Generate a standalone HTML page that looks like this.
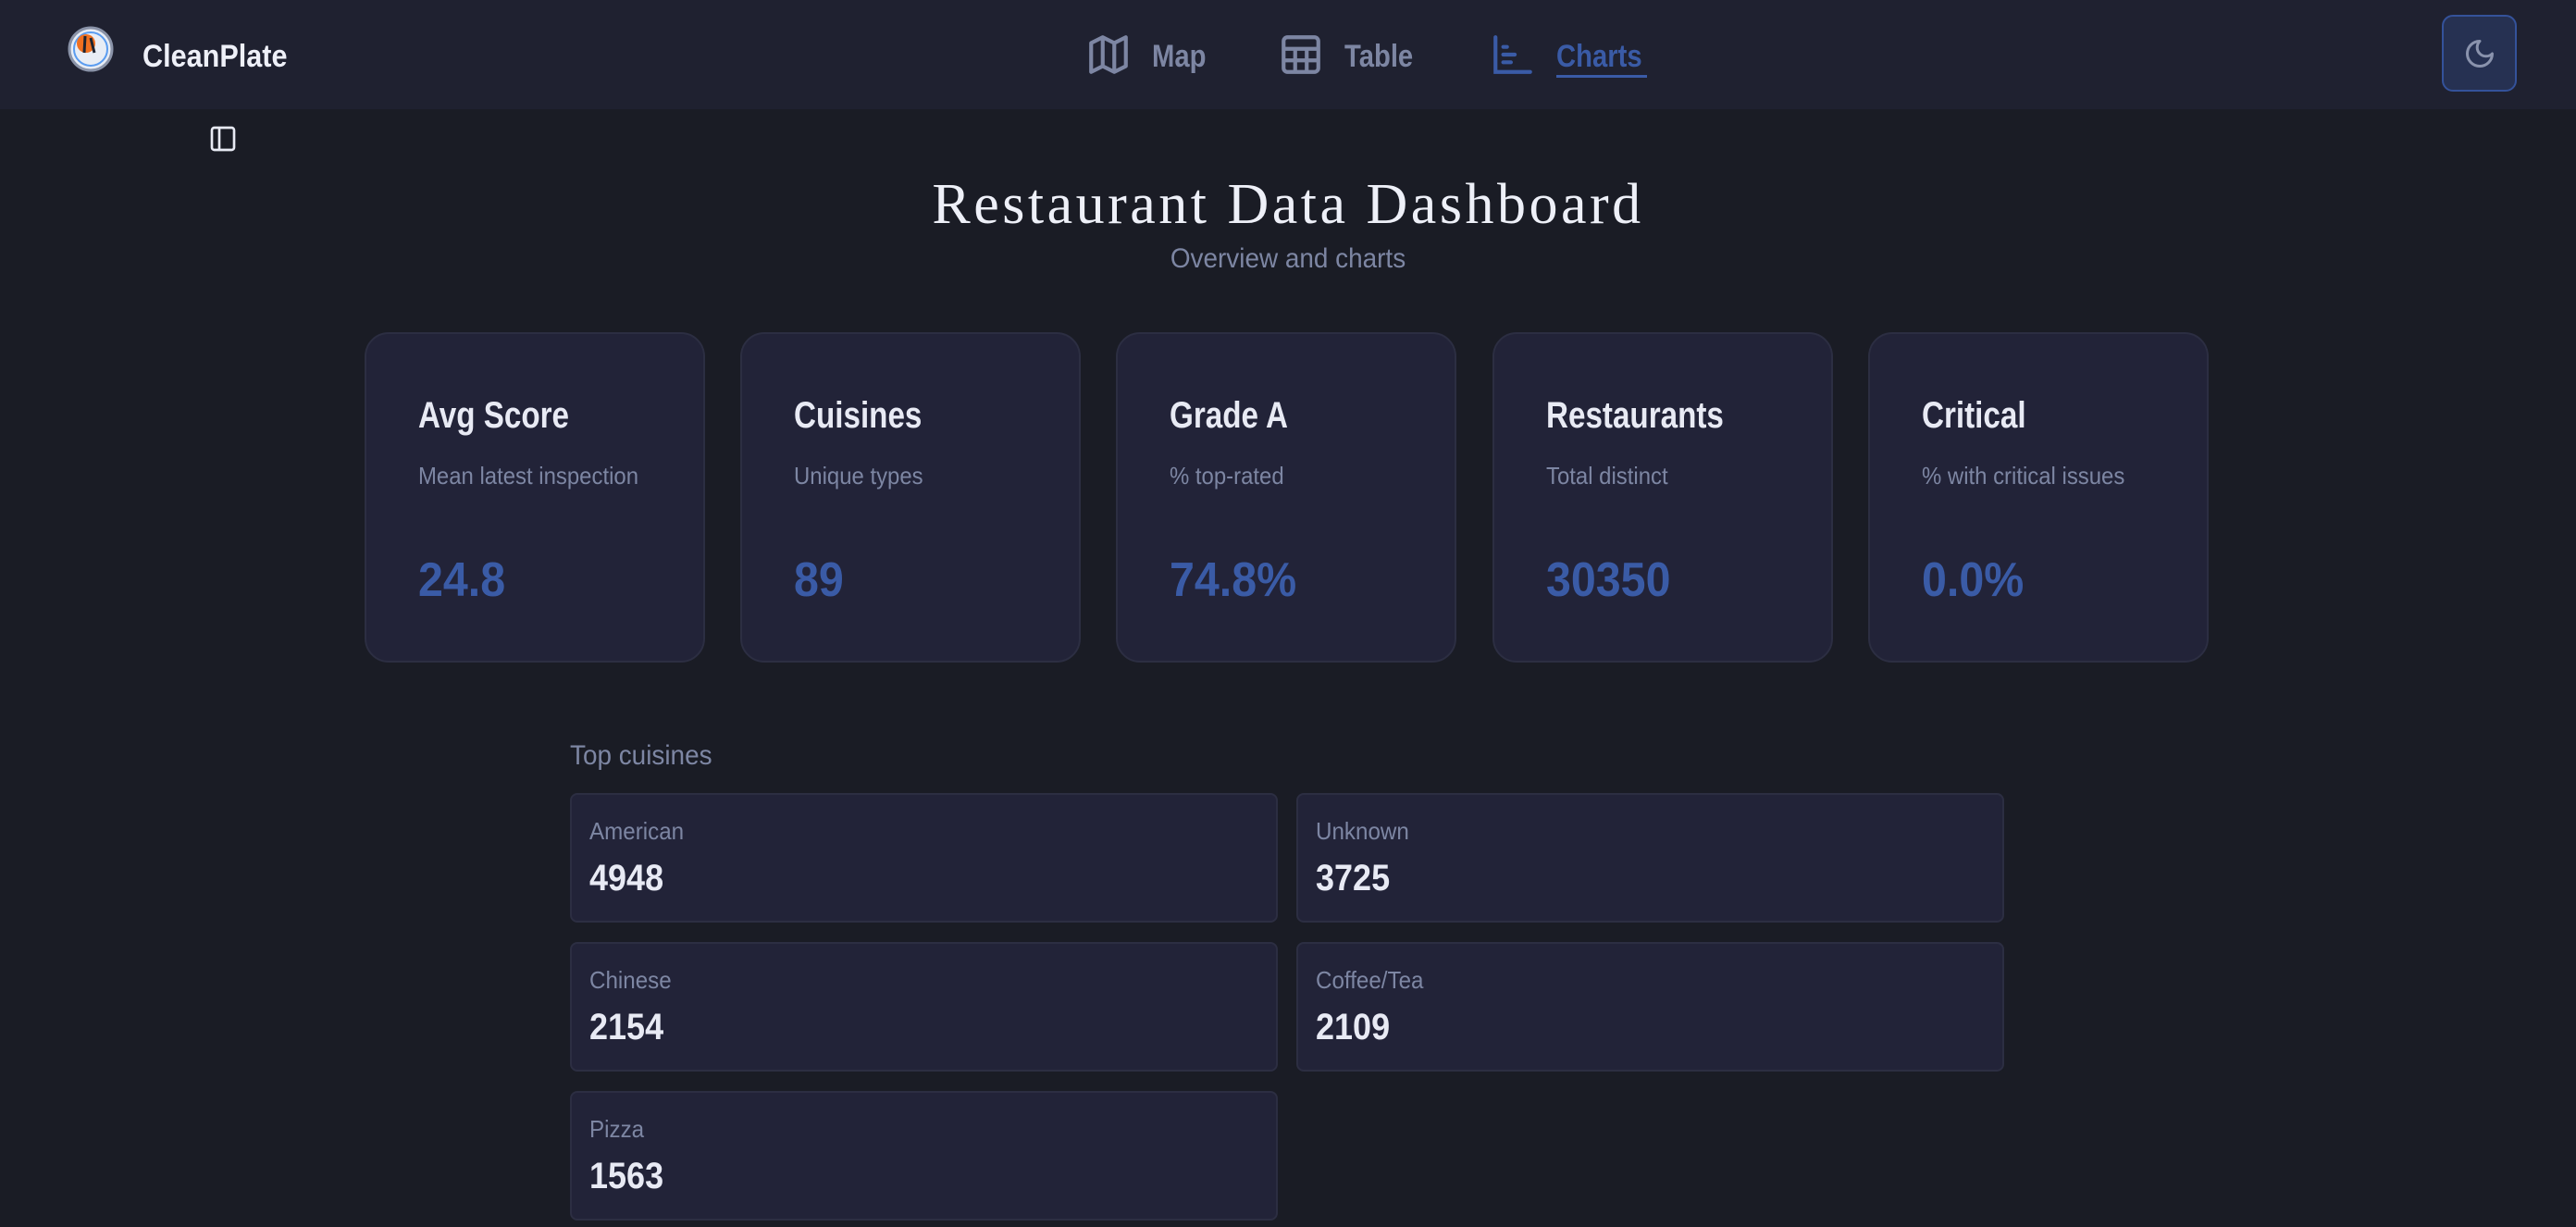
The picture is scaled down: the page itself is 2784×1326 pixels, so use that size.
<!DOCTYPE html>
<html><head><meta charset="utf-8"><style>
*{margin:0;padding:0;box-sizing:border-box}
body{width:2784px;height:1326px;background:#1a1c25;font-family:"Liberation Sans",sans-serif;position:relative;overflow:hidden;color:#e8eaf4}
.hdr{position:absolute;left:0;top:0;width:2784px;height:118px;background:#1f2130}
.a{position:absolute;white-space:nowrap;transform-origin:left center}
.r{transform:scaleX(.92)}
.b{transform:scaleX(.85)}
.nav{font-size:34px;font-weight:bold;color:#7d86a3;top:42px;transform:scaleX(.86)}
.card{position:absolute;top:359px;width:368px;height:357px;background:#222338;border:2px solid #2c2e42;border-radius:26px}
.card .t{left:56px;top:66px;font-size:40px;font-weight:bold;color:#e8eaf4;transform:scaleX(.83)}
.card .s{left:56px;top:138px;font-size:26px;color:#7d86a3;transform:scaleX(.92)}
.card .v{left:56px;top:236px;font-size:52px;font-weight:bold;color:#3a5ba6;transform:scaleX(.93)}
.cb{position:absolute;width:765px;height:140px;background:#222338;border:2px solid #2c2e42;border-radius:8px}
.cb .l{left:19px;top:24px;font-size:26px;color:#7d86a3;transform:scaleX(.93)}
.cb .n{left:19px;top:68px;font-size:40px;font-weight:bold;color:#e8eaf4;transform:scaleX(.9)}
</style></head><body>
<div class="hdr"></div>
<svg class="a" style="left:72px;top:27px" width="52" height="52" viewBox="0 0 52 52">
<circle cx="26" cy="26" r="23" fill="#e8edf5" stroke="#8a93a8" stroke-width="3"/>
<circle cx="26" cy="26" r="18" fill="none" stroke="#5a9cf0" stroke-width="2"/>
<circle cx="21" cy="20" r="10" fill="#f07020"/>
<path d="M20 12 L19 30 M26 14 L30 30" stroke="#1f2430" stroke-width="3"/>
</svg>
<div class="a" style="left:154px;top:42px;font-size:34px;font-weight:bold;color:#eef0f8;transform:scaleX(.9)">CleanPlate</div>
<svg class="a" style="left:1173px;top:34px" width="50" height="50" viewBox="0 0 24 24" fill="none" stroke="#7d86a3" stroke-width="2" stroke-linejoin="round"><path d="M3 6l6-3 6 3 6-3v15l-6 3-6-3-6 3z M9 3v15 M15 6v15"/></svg>
<div class="a nav" style="left:1245px">Map</div>
<svg class="a" style="left:1381px;top:34px" width="50" height="50" viewBox="0 0 24 24" fill="none" stroke="#7d86a3" stroke-width="2"><rect x="3" y="3" width="18" height="18" rx="2"/><path d="M3 9h18M3 15h18M9 9v12M15 9v12"/></svg>
<div class="a nav" style="left:1453px">Table</div>
<svg class="a" style="left:1610px;top:34px" width="50" height="50" viewBox="0 0 24 24" fill="none" stroke="#3a5ba6" stroke-width="2" stroke-linecap="round"><path d="M3 3v18h18M7 8h2M7 12h6M7 16h4"/></svg>
<div class="a nav" style="left:1682px;color:#3a5ba6">Charts</div>
<div class="a" style="left:1682px;top:81px;width:98px;height:3px;background:#3a5ba6"></div>
<div class="a" style="left:2639px;top:16px;width:81px;height:83px;background:#263152;border:2px solid #34529a;border-radius:12px"></div>
<svg class="a" style="left:2662px;top:40px" width="36" height="36" viewBox="0 0 24 24" fill="none" stroke="#8a93ad" stroke-width="2" stroke-linecap="round" stroke-linejoin="round"><path d="M12 3a6 6 0 0 0 9 9 9 9 0 1 1-9-9z"/></svg>
<svg class="a" style="left:225px;top:134px" width="32" height="32" viewBox="0 0 24 24" fill="none" stroke="#e8eaf4" stroke-width="2"><rect x="3" y="3" width="18" height="18" rx="2"/><path d="M9 3v18"/></svg>
<div class="a" style="left:0;width:2784px;text-align:center;top:186px;font-family:'Liberation Serif',serif;font-size:62px;letter-spacing:3.5px;color:#eef0f8;transform-origin:center">Restaurant Data Dashboard</div>
<div class="a" style="left:0;width:2784px;text-align:center;top:263px;font-size:30px;color:#7d86a3;transform:scaleX(.93);transform-origin:center">Overview and charts</div>
<div class="card" style="left:394px"><div class="a t">Avg Score</div><div class="a s">Mean latest inspection</div><div class="a v">24.8</div></div>
<div class="card" style="left:800px"><div class="a t">Cuisines</div><div class="a s">Unique types</div><div class="a v">89</div></div>
<div class="card" style="left:1206px"><div class="a t">Grade A</div><div class="a s">% top-rated</div><div class="a v">74.8%</div></div>
<div class="card" style="left:1613px"><div class="a t">Restaurants</div><div class="a s">Total distinct</div><div class="a v">30350</div></div>
<div class="card" style="left:2019px"><div class="a t">Critical</div><div class="a s">% with critical issues</div><div class="a v">0.0%</div></div>
<div class="a" style="left:616px;top:800px;font-size:30px;color:#7d86a3;transform:scaleX(.93)">Top cuisines</div>
<div class="cb" style="left:616px;top:857px"><div class="a l">American</div><div class="a n">4948</div></div>
<div class="cb" style="left:1401px;top:857px"><div class="a l">Unknown</div><div class="a n">3725</div></div>
<div class="cb" style="left:616px;top:1018px"><div class="a l">Chinese</div><div class="a n">2154</div></div>
<div class="cb" style="left:1401px;top:1018px"><div class="a l">Coffee/Tea</div><div class="a n">2109</div></div>
<div class="cb" style="left:616px;top:1179px"><div class="a l">Pizza</div><div class="a n">1563</div></div>
</body></html>
